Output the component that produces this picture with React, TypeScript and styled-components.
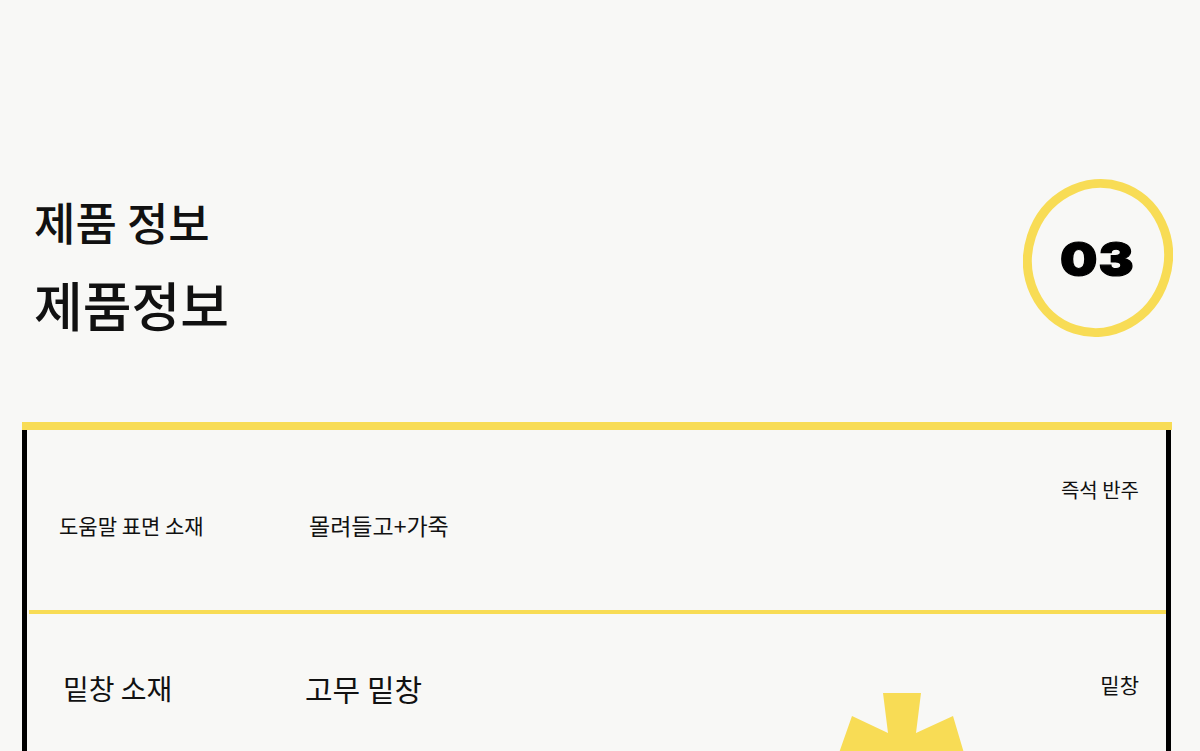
import styled, { createGlobalStyle } from 'styled-components';

const YELLOW = '#f8dc55';

const GlobalStyle = createGlobalStyle`
  body {
    margin: 0;
    background: #f8f8f6;
    color: #111;
    font-family: "Noto Sans CJK KR", "Noto Sans", sans-serif;
  }
`;

const Page = styled.div`
  position: relative;
  min-height: 751px;
  overflow: hidden;
`;

const Header = styled.header`
  display: flex;
  justify-content: space-between;
  align-items: flex-start;
  padding: 178px 27px 0 34px;
`;

const Titles = styled.div`
  display: flex;
  flex-direction: column;
  gap: 34px;
  margin-top: 21px;
`;

const Title = styled.h1<{ size: number }>`
  margin: 0;
  font-size: ${({ size }) => size}px;
  font-weight: 500;
  line-height: 1;
`;

const Badge = styled.div`
  position: relative;
  width: 150px;
  height: 160px;
  display: flex;
  align-items: center;
  justify-content: center;
`;

const Ring = styled.svg`
  position: absolute;
  inset: 0;
`;

const BadgeNumber = styled.span`
  position: relative;
  color: #000;
  font-family: Inter, "DejaVu Sans", sans-serif;
  font-weight: 900;
  font-size: 47px;
  letter-spacing: 1px;
  -webkit-text-stroke: 1.2px #000;
  transform: scaleX(1.12);
  margin-right: 2px;
`;

const Table = styled.section`
  margin: 84px 28px 0 22px;
  border-top: 8px solid ${YELLOW};
`;

const Body = styled.div`
  border-left: 5px solid #000;
  border-right: 5px solid #000;
  margin-right: 1px;
  padding-left: 2px;
`;

const Row = styled.div<{ top: number; cols: string; indent: number; divider?: boolean }>`
  display: grid;
  grid-template-columns: ${({ cols }) => cols};
  align-items: start;
  min-height: 184px;
  box-sizing: border-box;
  padding: ${({ top, indent }) => `${top}px 27px 0 ${indent}px`};
  border-bottom: ${({ divider }) => (divider ? `4px solid ${YELLOW}` : 'none')};
`;

const Cell = styled.span<{ size: number; drop?: number }>`
  font-size: ${({ size }) => size}px;
  line-height: 1;
  margin-top: ${({ drop }) => drop ?? 0}px;
  white-space: nowrap;
`;

const Aside = styled(Cell)`
  justify-self: end;
`;

const Burst = styled.svg`
  position: absolute;
  left: 830px;
  top: 690px;
`;

export default function App() {
  return (
    <Page>
      <GlobalStyle />
      <Header>
        <Titles>
          <Title size={45}>제품 정보</Title>
          <Title size={53}>제품정보</Title>
        </Titles>
        <Badge>
          <Ring width="150" height="160" viewBox="0 0 150 160">
            <ellipse
              cx="75"
              cy="80"
              rx="70"
              ry="75"
              transform="rotate(18 75 80)"
              fill="none"
              stroke={YELLOW}
              strokeWidth="9"
            />
          </Ring>
          <BadgeNumber>03</BadgeNumber>
        </Badge>
      </Header>

      <Table>
        <Body>
          <Row top={50} cols="250px 1fr auto" indent={30} divider>
            <Cell size={21} drop={35}>도움말 표면 소재</Cell>
            <Cell size={23} drop={34}>몰려들고+가죽</Cell>
            <Aside size={20}>즉석 반주</Aside>
          </Row>
          <Row top={60} cols="242px 1fr auto" indent={34}>
            <Cell size={28}>밑창 소재</Cell>
            <Cell size={30} drop={-1}>고무 밑창</Cell>
            <Aside size={21}>밑창</Aside>
          </Row>
        </Body>
      </Table>

      <Burst width="145" height="80" viewBox="0 0 145 80">
        <polygon
          points="53,3 91,3 86,43 123,26 139,80 3,80 22,26 58,43"
          fill={YELLOW}
        />
      </Burst>
    </Page>
  );
}
